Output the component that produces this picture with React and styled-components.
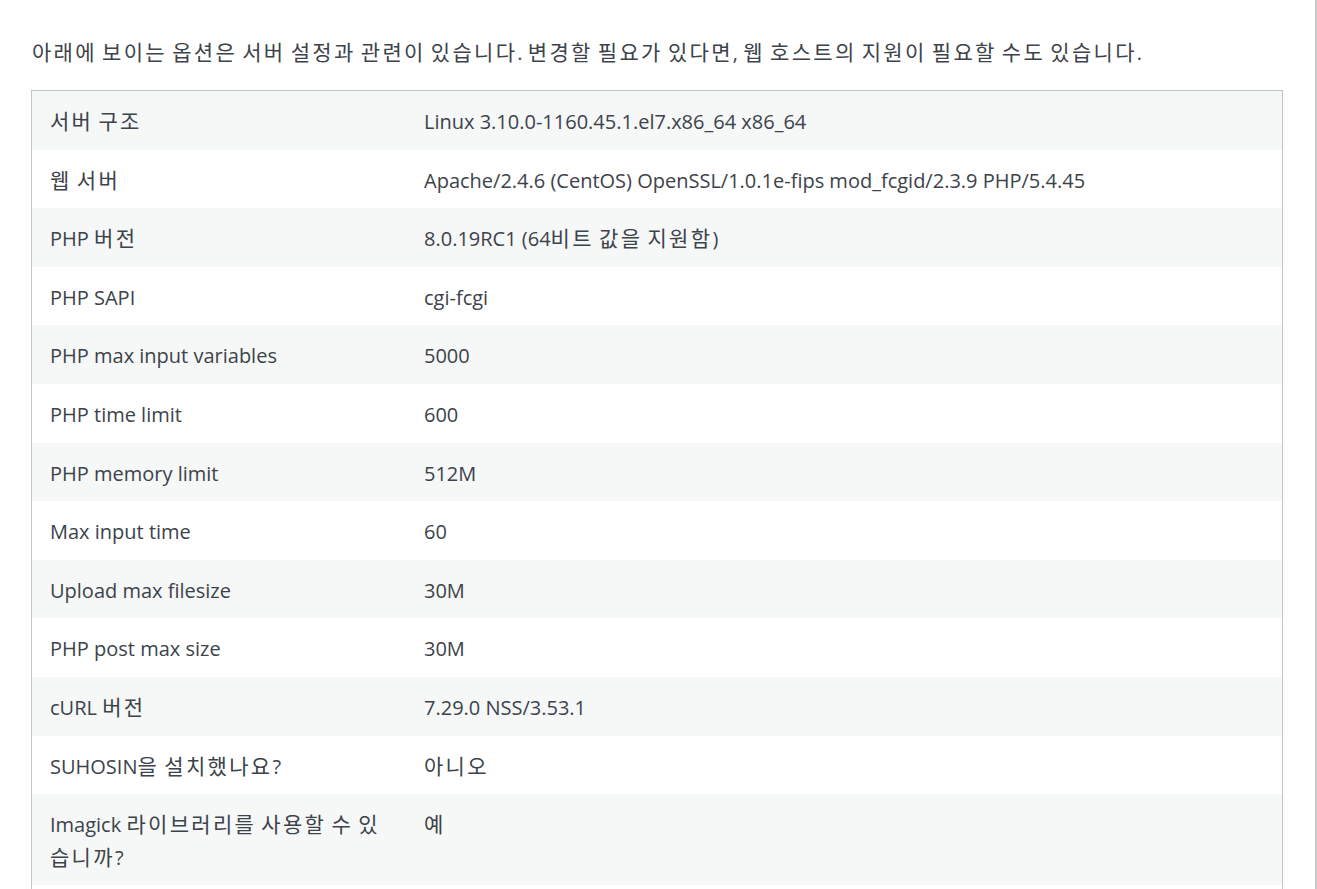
import styled, { createGlobalStyle } from "styled-components";

const GlobalStyle = createGlobalStyle`
  html, body {
    margin: 0;
    padding: 0;
    background: #fff;
  }
  body {
    font-family: "Open Sans", "Noto Sans CJK KR", sans-serif;
    color: #3c434a;
  }
`;

const Page = styled.div`
  width: 1317px;
  min-height: 889px;
  border-right: 2px solid #c8c8c8;
  box-sizing: border-box;
  padding: 36px 0 0 31px;
`;

const Intro = styled.p`
  margin: 0 0 20px 1px;
  font-size: 20px;
  line-height: 34px;
`;

// 한글은 원본(맑은 고딕)보다 좁게 나와서 크기와 자간으로 맞춤
const Ko = styled.span`
  font-size: 21px;
  line-height: 1;
  letter-spacing: 2.3px;
`;

const Table = styled.table`
  width: 1252px;
  border: 1px solid #c3c4c7;
  border-collapse: collapse;
  table-layout: fixed;
  font-size: 20px;
`;

const Row = styled.tr`
  background: ${(p) => (p.$odd ? "#f6f7f7" : "#fff")};
`;

const Cell = styled.td`
  padding: 15px 18px 11px;
  line-height: 32.6px;
  vertical-align: top;
  width: ${(p) => (p.$label ? "338px" : "auto")};
`;

const ko = (text) =>
  text.split(/([\uac00-\ud7a3]+)/).map((part, i) =>
    /[\uac00-\ud7a3]/.test(part) ? <Ko key={i}>{part}</Ko> : part
  );

const rows = [
  ["서버 구조", "Linux 3.10.0-1160.45.1.el7.x86_64 x86_64"],
  ["웹 서버", "Apache/2.4.6 (CentOS) OpenSSL/1.0.1e-fips mod_fcgid/2.3.9 PHP/5.4.45"],
  ["PHP 버전", "8.0.19RC1 (64비트 값을 지원함)"],
  ["PHP SAPI", "cgi-fcgi"],
  ["PHP max input variables", "5000"],
  ["PHP time limit", "600"],
  ["PHP memory limit", "512M"],
  ["Max input time", "60"],
  ["Upload max filesize", "30M"],
  ["PHP post max size", "30M"],
  ["cURL 버전", "7.29.0 NSS/3.53.1"],
  ["SUHOSIN을 설치했나요?", "아니오"],
  ["Imagick 라이브러리를 사용할 수 있습니까?", "예"],
  ["Pretty permalinks가 지원되나요?", "예"],
  ["htaccess 규칙", "사용자 정의 규칙이 추가되었습니다."],
];

export default function App() {
  return (
    <Page>
      <GlobalStyle />
      <Intro>
        {ko("아래에 보이는 옵션은 서버 설정과 관련이 있습니다. 변경할 필요가 있다면, 웹 호스트의 지원이 필요할 수도 있습니다.")}
      </Intro>
      <Table>
        <tbody>
          {rows.map(([label, value], i) => (
            <Row key={label} $odd={i % 2 === 0}>
              <Cell $label>{ko(label)}</Cell>
              <Cell>{ko(value)}</Cell>
            </Row>
          ))}
        </tbody>
      </Table>
    </Page>
  );
}
